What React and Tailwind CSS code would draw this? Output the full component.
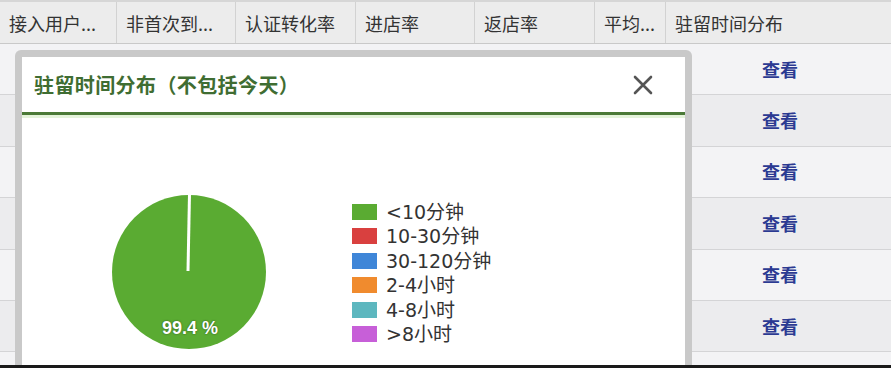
import React from "react";

const cols = [
  { label: "接入用户...", w: "w-[117px]" },
  { label: "非首次到...", w: "w-[119px]" },
  { label: "认证转化率", w: "w-[120px]" },
  { label: "进店率", w: "w-[119px]" },
  { label: "返店率", w: "w-[120px]" },
  { label: "平均...", w: "w-[71px]" },
  { label: "驻留时间分布", w: "flex-1" },
];

const legend = [
  { label: "<10分钟", color: "bg-[#5aab32]" },
  { label: "10-30分钟", color: "bg-[#d9403f]" },
  { label: "30-120分钟", color: "bg-[#3f86d8]" },
  { label: "2-4小时", color: "bg-[#f08b2e]" },
  { label: "4-8小时", color: "bg-[#5db7bf]" },
  { label: ">8小时", color: "bg-[#c75fd8]" },
];

function Pie() {
  return (
    <svg width="156" height="156" viewBox="0 0 156 156">
      <circle cx="78" cy="78" r="77" fill="#5aab32" />
      <line x1="77" y1="77" x2="78.5" y2="0" stroke="#ffffff" strokeWidth="3" />
      <text
        x="79"
        y="140"
        textAnchor="middle"
        fill="#ffffff"
        fontSize="18"
        fontWeight="bold"
        fontFamily="'Liberation Sans', Arial, sans-serif"
        style={{ textShadow: "0 0 2px rgba(0,0,0,0.5)" }}
      >
        99.4 %
      </text>
    </svg>
  );
}

export default function App() {
  return (
    <div className="relative w-[891px] h-[368px] overflow-hidden bg-[#f1f1f3] font-['Noto_Sans_CJK_SC',sans-serif] text-[#333]">
      {/* table */}
      <div className="flex flex-col">
        <div className="flex h-[44px] border-t-[2px] border-[#d6d6d6] border-b border-b-[#c9c9c9] bg-[#ececec]">
          {cols.map((c, i) => (
            <div
              key={i}
              className={`${c.w} flex items-center pl-[9px] pt-[2px] text-[18px] ${i < cols.length - 1 ? "border-r border-[#d2d2d2]" : ""}`}
            >
              {c.label}
            </div>
          ))}
        </div>
        {[0, 1, 2, 3, 4, 5, 6].map((r) => (
          <div
            key={r}
            className={`flex h-[51.4px] shrink-0 border-b border-[#d4d4d6] ${r % 2 === 0 ? "bg-[#f3f3f5]" : "bg-[#ececee]"}`}
          >
            <div className="w-[666px]" />
            <div className="flex-1 flex items-center justify-center pl-[3px] text-[18px] font-bold text-[#2b3a92]">
              {r < 6 ? "查看" : ""}
            </div>
          </div>
        ))}
      </div>

      {/* modal */}
      <div className="absolute left-[15px] top-[50px] w-[677px] h-[330px] rounded-t-[6px] border-[7px] border-b-0 border-[#c4c4c4]/90 bg-white">
        <div className="flex h-[58px] items-center justify-between pl-[12px] pr-[32px] border-b-[3px] border-[#4b7a37]">
          <div className="text-[20px] tracking-[0.4px] font-bold text-[#3f6d32]">驻留时间分布（不包括今天）</div>
          <svg width="20" height="20" viewBox="0 0 20 20">
            <path d="M2 2 L18 18 M18 2 L2 18" stroke="#555" strokeWidth="2.6" strokeLinecap="round" />
          </svg>
        </div>
        <div className="h-[3px] bg-[#e4f3da]" />
        <div className="flex pl-[89px] pt-[76px]">
          <Pie />
          <div className="ml-[85px] mt-[10px] flex flex-col gap-[8.4px] font-['DejaVu_Sans','Noto_Sans_CJK_SC',sans-serif] text-[19px] leading-[16px] text-[#333]">
            {legend.map((l) => (
              <div key={l.label} className="flex items-center gap-[9px]">
                <div className={`w-[25px] h-[16px] shrink-0 ${l.color}`} />
                <span>{l.label}</span>
              </div>
            ))}
          </div>
        </div>
      </div>

      <div className="absolute left-0 bottom-0 w-full h-[3px] bg-[#1a1a1a]" />
    </div>
  );
}
